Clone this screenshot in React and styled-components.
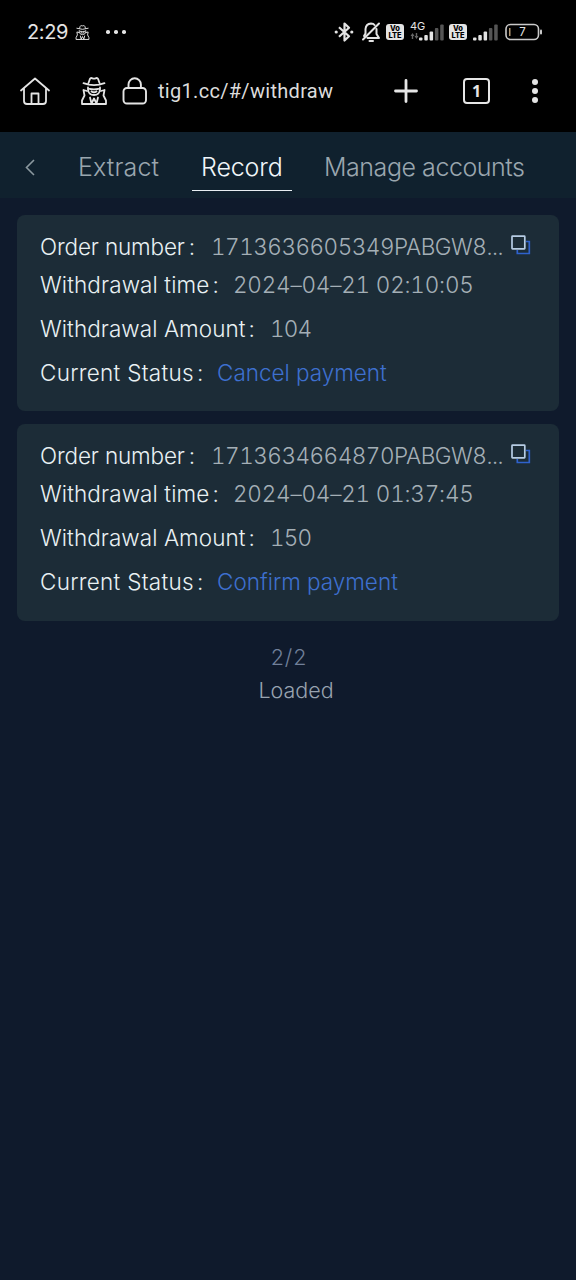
import React from "react";
import styled, { createGlobalStyle } from "styled-components";

const Global = createGlobalStyle`
  * { box-sizing: border-box; }
  body { margin: 0; background: #0f1a2c; font-family: Inter, "Noto Sans", sans-serif; }
  svg { display: block; flex: none; }
`;

const Screen = styled.main`
  width: 576px;
  height: 1280px;
  overflow: hidden;
  background: #0f1a2c;
`;

const StatusBar = styled.header`
  height: 56px;
  padding: 8px 33px 0 27px;
  display: flex;
  align-items: center;
  background: #000;
  color: #e4e4e4;
`;

const Clock = styled.span`
  width: 48px;
  font: 400 20px/24px Inter, sans-serif;
  letter-spacing: -0.4px;
  white-space: nowrap;
`;

const Indicators = styled.div`
  margin-left: auto;
  display: flex;
  align-items: center;
`;

const BrowserBar = styled.nav`
  height: 76px;
  padding: 0 30px 6px 19px;
  display: flex;
  align-items: center;
  background: #000;
  color: #e6e6e6;
`;

const Address = styled.span`
  margin-left: 10px;
  width: 236px;
  font: 400 20px/26px Roboto, sans-serif;
  letter-spacing: 0.3px;
  white-space: nowrap;
  color: #dcdcdc;
`;

const TabCount = styled.span`
  width: 27px;
  height: 26px;
  margin-left: 45px;
  border: 2px solid #e6e6e6;
  border-radius: 4px;
  display: grid;
  place-items: center;
  font: 700 16px/20px "Noto Sans", sans-serif;
`;

const Dots = styled.span`
  display: flex;
  flex-direction: ${(p) => (p.$vertical ? "column" : "row")};
  gap: ${(p) => p.$gap}px;
  margin-left: ${(p) => p.$left}px;
  i {
    width: ${(p) => p.$size}px;
    height: ${(p) => p.$size}px;
    border-radius: 50%;
    background: #e4e4e4;
  }
`;

const Tabs = styled.nav`
  height: 66px;
  padding-left: 24px;
  display: flex;
  align-items: flex-start;
  background: #10212e;
`;

const Back = styled.span`
  padding-top: 27px;
  width: 45px;
`;

const Tab = styled.span`
  width: ${(p) => p.$width}px;
  height: 59px;
  margin-left: ${(p) => p.$left || 0}px;
  padding: 20px 0 0 9px;
  border-bottom: 1.5px solid ${(p) => (p.$active ? "#e8eef2" : "transparent")};
  font-size: 25px;
  font-weight: 300;
  line-height: 30px;
  letter-spacing: ${(p) => p.$spacing || "0"};
  white-space: nowrap;
  color: ${(p) => (p.$active ? "#f0f6fa" : "#9aa6ae")};
`;

const List = styled.section`
  padding: 17px 17px 0;
  display: flex;
  flex-direction: column;
  gap: 13px;
`;

const Card = styled.article`
  height: ${(p) => p.$height}px;
  padding: 18px 0 0 23px;
  border-radius: 8px;
  background: #1c2c37;
`;

const Row = styled.div`
  height: ${(p) => p.$height}px;
  display: flex;
  align-items: flex-start;
  font-size: 22.5px;
  font-weight: 300;
  line-height: 28px;
  white-space: nowrap;
`;

const Label = styled.span`
  width: ${(p) => p.$width}px;
  flex: none;
  display: flex;
  letter-spacing: ${(p) => p.$spacing || "0"};
  color: #e9f1f3;
`;

const Colon = styled.span`
  margin-left: ${(p) => p.$gap || 4}px;
`;

const Value = styled.span`
  letter-spacing: ${(p) => p.$spacing || "0"};
  font-variant-numeric: tabular-nums;
  color: ${(p) => (p.$link ? "#3e70cf" : "#a4afb6")};
`;

const CopyButton = styled.span`
  margin-left: auto;
  padding: 2px 28px 0 0;
`;

const Footer = styled.footer`
  padding-top: 20px;
  text-align: center;
  font-size: 21.5px;
  font-weight: 300;
  line-height: 33px;
  color: #98a3b0;
`;

const PageCount = styled.div`
  padding-left: 2px;
  letter-spacing: 0.8px;
  color: #71809a;
`;

const LoadState = styled.div`
  padding-left: 16px;
`;

const Spy = ({ size, left = 0 }) => (
  <svg width={size} height={size} viewBox="0 0 26 28" fill="none" stroke="#e4e4e4" strokeWidth="1.8" strokeLinejoin="round" strokeLinecap="round" style={{ marginLeft: left }}>
    <path d="M7.500 6 8.800 2.200Q9.600.500 11.500 1.300q1.500.6 3 0Q16.400.500 17.200 2.200L18.500 6M2.500 6.200Q13 10.200 23.500 6.200" />
    <path d="M7 10.500v2q.5 5.500 6 5.500t6-5.500v-2M8.500 11.800q4.500 1 9 0M10.500 14.500q2.500 1.500 5 0" />
    <path d="M6 14 2.500 13l1 5.500-2.500 5V27h24v-3.500l-2.500-5 1-5.500-3.500 1M9 20.500l1.500 6L13 21.500l2.500 5 1.500-6" />
  </svg>
);

const Home = () => (
  <svg width="32" height="30" viewBox="0 0 32 30" fill="none" stroke="#e4e4e4" strokeWidth="1.8" strokeLinecap="round" strokeLinejoin="round">
    <path d="M2 14.500 16 2.500l14 12M5 12.500V25q0 3 3 3h16q3 0 3-3V12.500M12.500 28V17.500h7V28" />
  </svg>
);

const Lock = () => (
  <svg width="26" height="30" viewBox="0 0 26 30" fill="none" stroke="#e4e4e4" strokeWidth="1.9" style={{ marginLeft: 14 }}>
    <rect x="1.500" y="12" width="22.500" height="15.500" rx="3.500" />
    <path d="M6.500 12V8.500a6.200 6.200 0 0 1 12.400 0V12" />
  </svg>
);

const Bluetooth = () => (
  <svg width="20" height="22" viewBox="0 0 20 22" fill="none" stroke="#e4e4e4" strokeWidth="2.200" strokeLinejoin="round">
    <path d="m5 6.200 10 9L10.500 19.500V2.500L15 6.800 5 15.800" />
    <circle cx="2.200" cy="11" r="1.600" fill="#e4e4e4" stroke="none" />
    <circle cx="17.800" cy="11" r="1.600" fill="#e4e4e4" stroke="none" />
  </svg>
);

const Muted = () => (
  <svg width="20" height="22" viewBox="0 0 20 22" fill="none" stroke="#e4e4e4" strokeWidth="2" strokeLinecap="round" strokeLinejoin="round" style={{ marginLeft: 7 }}>
    <path d="M13.500 4Q12.500 2.500 10 2.500 5 2.800 4.500 8v4.500L3 15M6.500 17H18l-2.500-4V8M18 2.500 2 18.500M8.500 20h3.500" />
  </svg>
);

const Badge = styled.span`
  width: 18px;
  height: 16px;
  margin-left: ${(p) => p.$left}px;
  border-radius: 3px;
  display: flex;
  flex-direction: column;
  align-items: center;
  justify-content: center;
  background: #e4e4e4;
  color: #000;
  font: 800 7.5px/7px Inter, sans-serif;
`;

const VoLte = ({ left }) => (
  <Badge $left={left}>
    <span>Vo</span>
    <span>LTE</span>
  </Badge>
);

const Network = styled.span`
  width: 17px;
  height: 22px;
  margin: 0 -8px 0 6px;
  display: flex;
  flex-direction: column;
  font: 400 11px/11px Inter, sans-serif;
  white-space: nowrap;
`;

const DataArrows = () => (
  <svg width="9" height="8" viewBox="0 0 9 8" fill="#666">
    <path d="M2.500 1 4.500 4H3.200v3H1.800V4H.5zM6.500 7 4.500 4h1.300V1h1.400v3h1.300z" />
  </svg>
);

const Bars = ({ left = 0, active }) => (
  <svg width="25" height="20" viewBox="0 0 25 20" style={{ marginLeft: left }}>
    {[3, 5.5, 9, 12.5, 16].map((h, i) => (
      <rect key={i} x={i * 5.3} y={18.5 - h} width="3.5" height={h} rx="1" fill={i < active ? "#e4e4e4" : "#555"} />
    ))}
  </svg>
);

const Battery = () => (
  <svg width="38" height="18" viewBox="0 0 38 18" style={{ marginLeft: 7 }}>
    <rect x="1" y="1.500" width="32.500" height="15" rx="4.500" fill="none" stroke="#c9c9c9" strokeWidth="1.600" />
    <rect x="4" y="5" width="1.500" height="8" fill="#b39773" />
    <rect x="35" y="6.500" width="2" height="5" rx="1" fill="#c9c9c9" />
    <text x="17.500" y="13.200" textAnchor="middle" fontSize="11.500" fontFamily="Inter, sans-serif" fill="#e4e4e4">7</text>
  </svg>
);

const Copy = () => (
  <svg width="20" height="20" viewBox="0 0 20 20" fill="none" strokeWidth="1.700">
    <path d="M15 6.500h3.300v12h-12V15" stroke="#2f62cc" />
    <rect x="1" y="1.200" width="12.800" height="12.600" rx=".5" stroke="#b6cce4" />
  </svg>
);

const orders = [
  { id: "1713636605349PABGW8...", time: "2024–04–21 02:10:05", amount: "104", status: "Cancel payment", height: 196 },
  { id: "1713634664870PABGW8...", time: "2024–04–21 01:37:45", amount: "150", status: "Confirm payment", height: 197 },
];

function Order({ order }) {
  return (
    <Card $height={order.height}>
      <Row $height={38}>
        <Label $width={171} $spacing="-0.15px">Order number<Colon>:</Colon></Label>
        <Value $spacing="-0.48px">{order.id}</Value>
        <CopyButton><Copy /></CopyButton>
      </Row>
      <Row $height={44}>
        <Label $width={193} $spacing="0.1px">Withdrawal time<Colon $gap={3}>:</Colon></Label>
        <Value $spacing="-0.2px">{order.time}</Value>
      </Row>
      <Row $height={44}>
        <Label $width={230} $spacing="0.06px">Withdrawal Amount<Colon $gap={3}>:</Colon></Label>
        <Value $spacing="-0.8px">{order.amount}</Value>
      </Row>
      <Row $height={44}>
        <Label $width={177} $spacing="0.28px">Current Status<Colon $gap={3}>:</Colon></Label>
        <Value $link>{order.status}</Value>
      </Row>
    </Card>
  );
}

export default function App() {
  return (
    <Screen>
      <Global />
      <StatusBar>
        <Clock>2:29</Clock>
        <Spy size={15} />
        <Dots $size={3.5} $gap={4.5} $left={16}><i /><i /><i /></Dots>
        <Indicators>
          <Bluetooth />
          <Muted />
          <VoLte left={5} />
          <Network>4G<DataArrows /></Network>
          <Bars active={3} />
          <VoLte left={5} />
          <Bars left={6} active={3} />
          <Battery />
        </Indicators>
      </StatusBar>
      <BrowserBar>
        <Home />
        <Spy size={28} left={29} />
        <Lock />
        <Address>tig1.cc/#/withdraw</Address>
        <svg width="24" height="24" viewBox="0 0 24 24" stroke="#e6e6e6" strokeWidth="2.800" strokeLinecap="round">
          <path d="M12 1.500v21M1.500 12h21" />
        </svg>
        <TabCount>1</TabCount>
        <Dots $vertical $size={6} $gap={3} $left={42}><i /><i /><i /></Dots>
      </BrowserBar>
      <Tabs>
        <Back>
          <svg width="12" height="17" viewBox="0 0 12 17" fill="none" stroke="#8b989f" strokeWidth="1.600"><path d="M10 1 2.500 8.500 10 16" /></svg>
        </Back>
        <Tab $width={99} $spacing="0.15px">Extract</Tab>
        <Tab $width={100} $left={24} $spacing="-0.15px" $active>Record</Tab>
        <Tab $width={220} $left={23} $spacing="-0.45px">Manage accounts</Tab>
      </Tabs>
      <List>
        {orders.map((order) => <Order key={order.id} order={order} />)}
      </List>
      <Footer>
        <PageCount>2/2</PageCount>
        <LoadState>Loaded</LoadState>
      </Footer>
    </Screen>
  );
}
